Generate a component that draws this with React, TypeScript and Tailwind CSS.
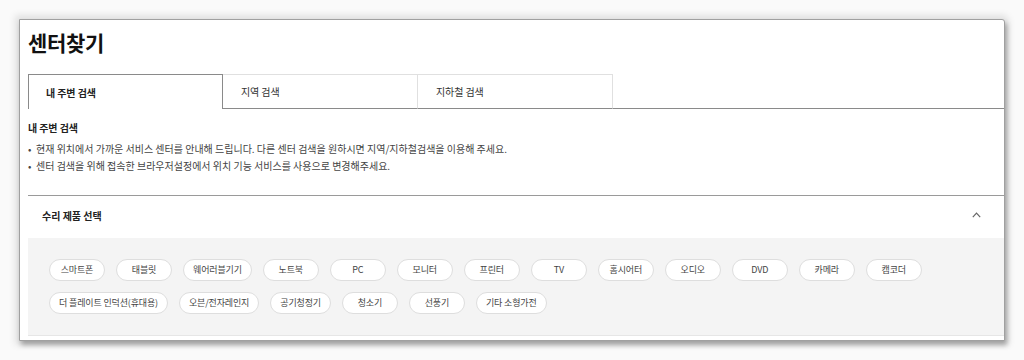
const rowChips = [
    '스마트폰',
    '태블릿',
    '웨어러블기기',
    '노트북',
    'PC',
    '모니터',
    '프린터',
    'TV',
    '홈시어터',
    '오디오',
    'DVD',
    '카메라',
    '캠코더',
    '더 플레이트 인덕션(휴대용)',
    '오븐/전자레인지',
    '공기청정기',
    '청소기',
    '선풍기',
    '기타 소형가전',
];

const tabs = ['내 주변 검색', '지역 검색', '지하철 검색'];

export default function App() {
    return (
        <div
            className="h-[360px] w-[1024px] overflow-hidden bg-[#fafafa] pt-[19px]"
            style={{ fontFamily: '"Noto Sans CJK KR", "Noto Sans", sans-serif' }}
        >
            {/* captured window frame */}
            <div className="ml-[19px] h-[322px] w-[986px] rounded-tr-[3px] border border-[#a0a0a0] bg-white shadow-[0_0_7px_4px_rgba(0,0,0,0.10),2px_4px_5px_rgba(0,0,0,0.30)]">
                <div className="pl-[8px]">
                    {/* Title */}
                    <div className="h-[54px] pt-[7px]">
                        <h1 className="text-[21px] font-bold leading-[30px] tracking-[-0.3px] text-[#111]">
                            센터찾기
                        </h1>
                    </div>

                    {/* Tabs */}
                    <div className="flex h-[35px]">
                        {tabs.map((t, i) =>
                            i === 0 ? (
                                <div
                                    key={t}
                                    className="flex w-[195px] items-center border-x border-t border-[#8a8a8a] pl-[17px] text-[10px] font-bold tracking-[-0.1px] text-[#222]"
                                >
                                    {t}
                                </div>
                            ) : (
                                <div
                                    key={t}
                                    className="flex w-[195px] items-center border-b border-r border-t border-[#e0e0e0] border-b-[#8a8a8a] pl-[18px] text-[10px] tracking-[-0.1px] text-[#333]"
                                >
                                    {t}
                                </div>
                            )
                        )}
                        <div className="flex-1 border-b border-[#8a8a8a]" />
                    </div>

                    {/* Description */}
                    <div className="h-[87px] border-b border-[#9a9a9a] pt-[11px]">
                        <div className="text-[10px] font-bold leading-[16px] tracking-[-0.1px] text-[#222]">
                            내 주변 검색
                        </div>
                        <ul className="mt-[4px] text-[10px] leading-[17px] text-[#444]">
                            <li className="flex">
                                <span className="w-[8px] shrink-0">•</span>
                                현재 위치에서 가까운 서비스 센터를 안내해 드립니다. 다른 센터 검색을 원하시면 지역/지하철검색을 이용해 주세요.
                            </li>
                            <li className="flex">
                                <span className="w-[8px] shrink-0">•</span>
                                센터 검색을 위해 접속한 브라우저설정에서 위치 기능 서비스를 사용으로 변경해주세요.
                            </li>
                        </ul>
                    </div>

                    {/* Product select header */}
                    <div className="flex h-[42px] items-center justify-between pb-[4px] pl-[14px] pr-[23px]">
                        <span className="text-[10px] font-bold tracking-[0px] text-[#222]">
                            수리 제품 선택
                        </span>
                        <svg width="9" height="6" viewBox="0 0 9 6" fill="none">
                            <polyline
                                points="0.8,5.2 4.5,1.2 8.2,5.2"
                                stroke="#666"
                                strokeWidth="1.2"
                            />
                        </svg>
                    </div>

                    {/* Chips */}
                    <div className="flex h-[98px] flex-wrap content-start gap-x-[11px] gap-y-[11px] border-b border-[#e6e6e6] bg-[#f4f4f4] pl-[21px] pr-[40px] pt-[21px]">
                        {rowChips.map((c) => (
                            <button
                                key={c}
                                className="flex h-[22px] min-w-[56px] items-center justify-center rounded-full border border-[#dedede] bg-white px-[9px] text-[9px] tracking-[-0.15px] text-[#444]"
                            >
                                {c}
                            </button>
                        ))}
                    </div>
                </div>
            </div>
        </div>
    );
}
